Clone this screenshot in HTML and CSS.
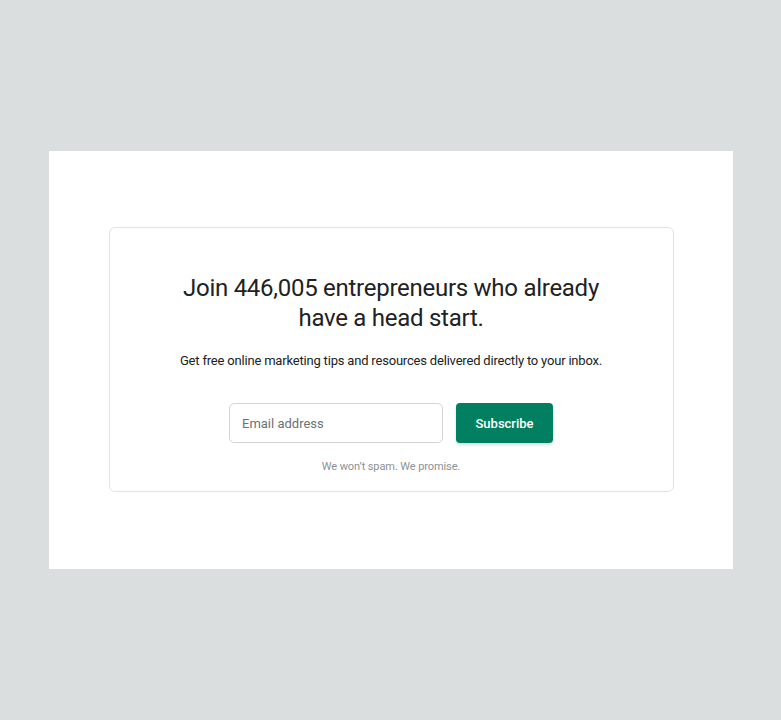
FILE: index.html
```html
<!DOCTYPE html>
<html lang="en">
<head>
<meta charset="utf-8">
<title>Newsletter</title>
<link rel="stylesheet" href="styles.css">
</head>
<body>
<div class="panel">
  <div class="card">
    <h2 class="title">Join 446,005 entrepreneurs who already<br>have a head start.</h2>
    <p class="lead">Get free online marketing tips and resources delivered directly to your inbox.</p>
    <form class="form">
      <input class="email" type="email" placeholder="Email address">
      <button class="btn" type="button">Subscribe</button>
    </form>
    <p class="note">We won’t spam. We promise.</p>
  </div>
</div>
</body>
</html>
```
FILE: styles.css
```css
* { box-sizing: border-box; }
html, body { margin: 0; padding: 0; }
body {
  background: #dadedf;
  font-family: Roboto, "Noto Sans", sans-serif;
  color: #212326;
  padding: 151px 48px 0 49px;
}
.panel {
  background: #fff;
  width: 684px;
  height: 418px;
  padding: 76px 59px 0 60px;
}
.card {
  border: 1px solid #dfe3e8;
  border-radius: 6px;
  height: 265px;
  padding: 45px 21px 0 20px;
  text-align: center;
}
.title {
  margin: 0;
  font-size: 24px;
  font-weight: 400;
  line-height: 30px;
  letter-spacing: -0.27px;
  color: #202223;
}
.lead {
  margin: 18px 0 0;
  font-size: 13px;
  line-height: 20px;
  letter-spacing: -0.19px;
  color: #202223;
}
.form {
  display: flex;
  justify-content: center;
  gap: 13px;
  margin-top: 32px;
}
.email {
  width: 214px;
  height: 40px;
  border: 1px solid #d2d5d8;
  border-radius: 5px;
  padding: 0 12px;
  font-family: inherit;
  font-size: 13px;
  color: #202223;
}
.email::placeholder { color: #6d7175; }
.btn {
  width: 97px;
  height: 40px;
  border: 0;
  border-radius: 4px;
  background: #008060;
  color: #fff;
  font-family: inherit;
  font-size: 13px;
  font-weight: 500;
  box-shadow: 0 2px 3px rgba(0,0,0,0.15);
}
.note {
  margin: 17px 0 0;
  font-size: 11px;
  line-height: 14px;
  letter-spacing: -0.1px;
  color: #8c9196;
}
```
